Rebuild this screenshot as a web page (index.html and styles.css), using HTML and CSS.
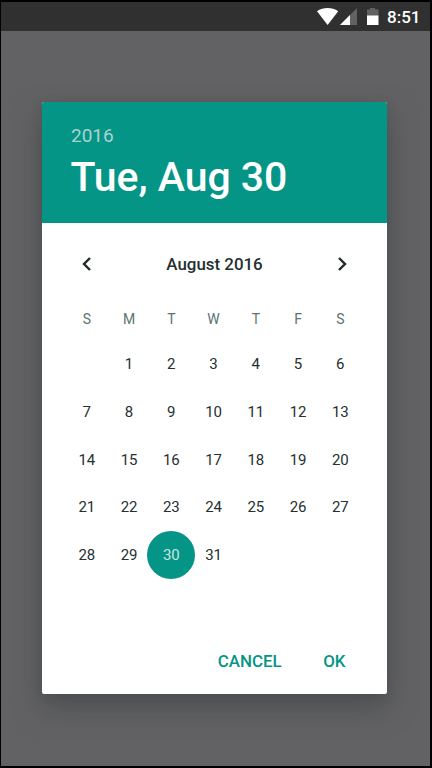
FILE: index.html
```html
<!DOCTYPE html>
<html lang="en">
<head>
<meta charset="utf-8">
<title>Date picker</title>
<link rel="stylesheet" href="styles.css">
</head>
<body>
<div class="screen">
  <header class="status-bar">
    <svg class="status-icons" width="64" height="20" viewBox="0 0 64 20">
      <path fill="#fff" d="M0 4.200C6.200-.2 15-.2 21.200 4.200L10.600 18Z"/>
      <path fill="#626262" d="M40 1v17H23z"/>
      <path fill="#fff" d="M33 8v10H23z"/>
      <path fill="#626262" d="M50 2.500h3V1h5v1.500h3.500V9H50z"/>
      <path fill="#fff" d="M50 8.500h11.500V18H50z"/>
    </svg>
    <span class="clock">8:51</span>
  </header>
  <main class="backdrop">
    <section class="dialog">
      <div class="dialog-header">
        <div class="year">2016</div>
        <div class="date">Tue, Aug 30</div>
      </div>
      <div class="month-bar">
        <svg class="chevron" width="12" height="16" viewBox="0 0 12 16"><path d="M9 2L3 8l6 6"/></svg>
        <span class="month">August 2016</span>
        <svg class="chevron" width="12" height="16" viewBox="0 0 12 16"><path d="M3 2l6 6-6 6"/></svg>
      </div>
      <div class="weekdays"><span>S</span><span>M</span><span>T</span><span>W</span><span>T</span><span>F</span><span>S</span></div>
      <div class="days">
        <span></span><span>1</span><span>2</span><span>3</span><span>4</span><span>5</span><span>6</span>
        <span>7</span><span>8</span><span>9</span><span>10</span><span>11</span><span>12</span><span>13</span>
        <span>14</span><span>15</span><span>16</span><span>17</span><span>18</span><span>19</span><span>20</span>
        <span>21</span><span>22</span><span>23</span><span>24</span><span>25</span><span>26</span><span>27</span>
        <span>28</span><span>29</span><span class="selected">30</span><span>31</span>
      </div>
      <div class="actions">
        <span>CANCEL</span>
        <span>OK</span>
      </div>
    </section>
  </main>
</div>
</body>
</html>
```
FILE: styles.css
```css
* { box-sizing: border-box; }
body { margin: 0; font-family: Roboto, sans-serif; color: #263030; }
.screen {
  width: 432px;
  height: 768px;
  border: solid #000;
  border-width: 2px 2px 2px 1px;
  background: #626264;
  overflow: hidden;
  display: flex;
  flex-direction: column;
}
.status-bar {
  height: 28.500px;
  flex: none;
  background: #303030;
  display: flex;
  justify-content: flex-end;
  align-items: flex-start;
  padding: 5px 9.500px 0 0;
}
.status-icons { margin-right: 6.500px; }
.clock { font-size: 17px; line-height: 20px; font-weight: 500; color: #fff; }
.backdrop { padding: 71.500px 0 0 41px; }
.dialog {
  width: 345px;
  height: 592px;
  border-radius: 2px;
  background: #fff;
  box-shadow: 0 13px 28px rgba(64, 68, 70, .65), 0 2px 8px rgba(64, 68, 70, .25);
  display: flex;
  flex-direction: column;
}
.dialog-header {
  height: 121px;
  flex: none;
  border-radius: 2px 2px 0 0;
  background: #059587;
  padding: 22px 29px 0;
}
.year { font-size: 19px; line-height: 24px; color: #a9d3ce; }
.date { font-size: 41px; line-height: 48px; font-weight: 500; color: #fff; margin: 5px 0 0 -.5px; letter-spacing: -.04px; white-space: nowrap; }
.month-bar {
  height: 81px;
  flex: none;
  display: flex;
  align-items: center;
  justify-content: space-between;
  padding: 0 39px;
}
.month { font-size: 16.900px; font-weight: 500; }
.chevron path { fill: none; stroke: #202828; stroke-width: 2.400; }
.weekdays, .days {
  display: grid;
  grid-template-columns: repeat(7, 42.250px);
  margin-left: 23.700px;
  text-align: center;
}
.weekdays { height: 36px; font-size: 14px; line-height: 30px; color: #5b7371; }
.days { grid-auto-rows: 47.800px; font-size: 15px; line-height: 48px; }
.selected {
  width: 48px;
  height: 48px;
  justify-self: center;
  border-radius: 50%;
  background: #059587;
  color: #c7e5e1;
}
.actions {
  margin-top: auto;
  height: 66px;
  display: flex;
  justify-content: flex-end;
  gap: 41.500px;
  padding-right: 41.500px;
  font-size: 16.900px;
  line-height: 66px;
  font-weight: 500;
  color: #059587;
}
```
